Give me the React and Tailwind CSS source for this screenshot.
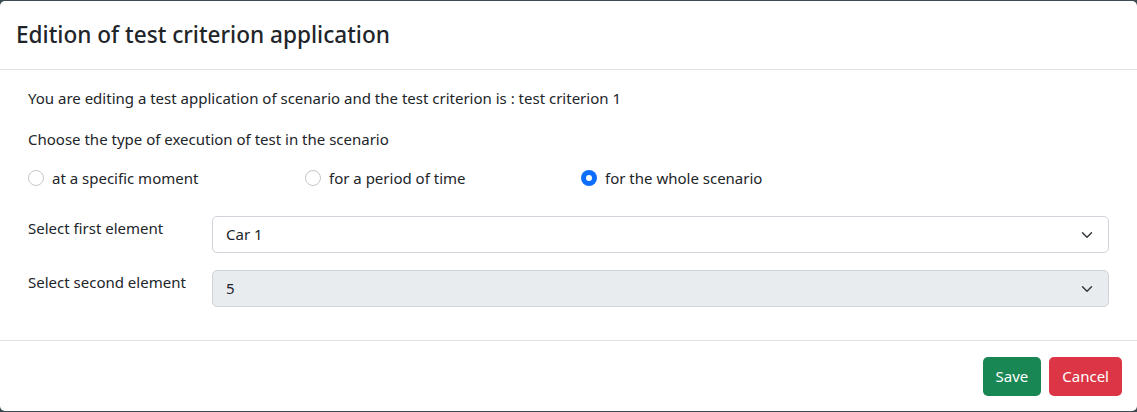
import React, { useState } from "react";

const font = { fontFamily: '"Noto Sans", "Open Sans", sans-serif' };

function Radio({ label, checked, onChange, className }) {
  return (
    <label className={"flex items-center gap-[8px] cursor-pointer " + (className || "")}>
      <span
        onClick={onChange}
        className={
          "w-[16px] h-[16px] rounded-full flex items-center justify-center shrink-0 " +
          (checked ? "bg-[#0d6efd]" : "border border-[#c4c8cc] bg-white")
        }
      >
        {checked && <span className="w-[6px] h-[6px] rounded-full bg-white" />}
      </span>
      <span className="text-[15px] text-[#212529]">{label}</span>
    </label>
  );
}

function Chevron() {
  return (
    <svg width="12" height="12" viewBox="0 0 16 16" className="absolute right-[15px] top-1/2 -translate-y-1/2">
      <path d="M2 5l6 6 6-6" fill="none" stroke="#343a40" strokeWidth="2" strokeLinecap="round" strokeLinejoin="round" />
    </svg>
  );
}

function SelectRow({ label, value, disabled }) {
  return (
    <div className="flex">
      <div className="w-[184px] shrink-0 text-[15px] text-[#212529] pt-[1px]">{label}</div>
      <div
        className={
          "relative flex-1 h-[37px] rounded-[5px] border border-[#ced4da] flex items-center px-[13px] text-[15px] text-[#212529] " +
          (disabled ? "bg-[#e9ecef]" : "bg-white")
        }
      >
        {value}
        <Chevron />
      </div>
    </div>
  );
}

export default function App() {
  const [mode, setMode] = useState("whole");
  return (
    <div className="w-[1137px] h-[412px] bg-[#3c4a52] overflow-hidden" style={font}>
      <div className="mt-[1px] h-[410px] bg-white rounded-[5px] flex flex-col">
        <div className="h-[69px] shrink-0 flex items-center px-[16px] border-b border-[#dee2e6]">
          <h5 className="text-[22.6px] font-medium text-[#212529]">Edition of test criterion application</h5>
        </div>
        <div className="flex-1 px-[28px] pt-[16px]">
          <p className="text-[15px] leading-[24px] text-[#212529] mb-[17px]">
            You are editing a test application of scenario and the test criterion is : test criterion 1
          </p>
          <p className="text-[15px] leading-[24px] text-[#212529] mb-[15px]">
            Choose the type of execution of test in the scenario
          </p>
          <div className="flex items-center h-[24px] mb-[26px]">
            <Radio label="at a specific moment" checked={mode === "moment"} onChange={() => setMode("moment")} className="w-[277px]" />
            <Radio label="for a period of time" checked={mode === "period"} onChange={() => setMode("period")} className="w-[276px]" />
            <Radio label="for the whole scenario" checked={mode === "whole"} onChange={() => setMode("whole")} />
          </div>
          <div className="flex flex-col gap-[17px]">
            <SelectRow label="Select first element" value="Car 1" />
            <SelectRow label="Select second element" value="5" disabled />
          </div>
        </div>
        <div className="h-[71px] shrink-0 border-t border-[#dee2e6] flex items-center justify-end gap-[8px] px-[15px]">
          <button className="h-[39px] px-[13px] rounded-[5px] bg-[#198754] text-white text-[15px]">Save</button>
          <button className="h-[39px] px-[13px] rounded-[5px] bg-[#dc3545] text-white text-[15px]">Cancel</button>
        </div>
      </div>
    </div>
  );
}
